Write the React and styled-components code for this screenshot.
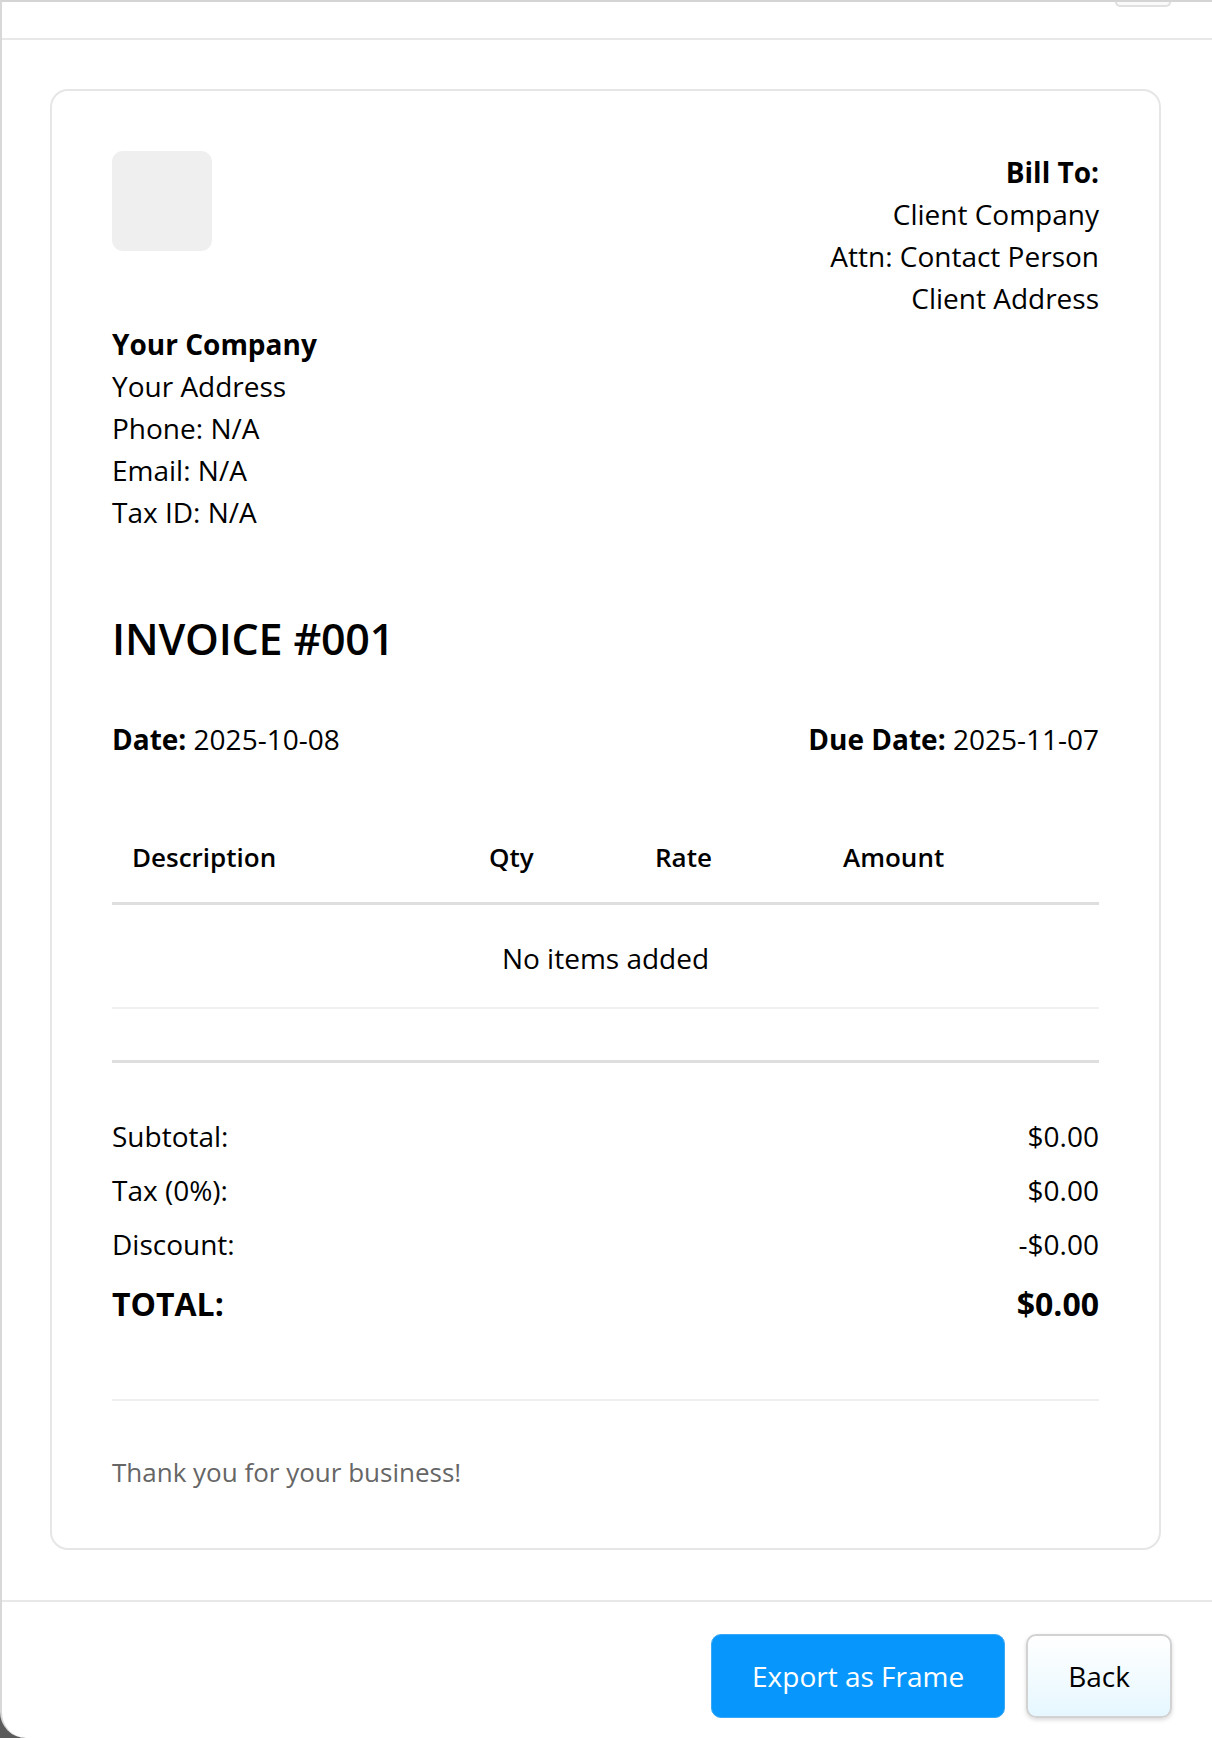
import React from "react";
import styled, { createGlobalStyle } from "styled-components";

const GlobalStyle = createGlobalStyle`
  html, body {
    margin: 0;
    padding: 0;
    background: #5b5b5b;
  }
  * { box-sizing: border-box; }
  body {
    font-family: "Open Sans", "Noto Sans", "Liberation Sans", sans-serif;
    color: #000;
  }
`;

const Screen = styled.div`
  height: 1738px;
  overflow: hidden;
  background: #5b5b5b;
`;

const Modal = styled.div`
  height: 1738px;
  background: #fff;
  border-top: 2px solid #d4d4d4;
  border-left: 2px solid #d8d8d8;
  border-bottom-left-radius: 26px;
  display: flex;
  flex-direction: column;
`;

const ModalHeader = styled.div`
  height: 38px;
  border-bottom: 2px solid #e8e8e8;
  display: flex;
  justify-content: flex-end;
  align-items: flex-start;
  padding-right: 41px;
`;

const CloseStub = styled.div`
  width: 56px;
  height: 5px;
  border: 2px solid #e0e0e0;
  border-top: none;
  border-radius: 0 0 8px 8px;
  background: #fafafa;
`;

const ModalBody = styled.div`
  padding: 49px 51px 50px 48px;
`;

const Card = styled.div`
  border: 2px solid #e6e6e6;
  border-radius: 18px;
  padding: 60px 60px 57px;
  font-size: 28px;
  line-height: 42px;
`;

const TopRow = styled.div`
  display: flex;
  justify-content: space-between;
  align-items: flex-start;
`;

const LogoBox = styled.div`
  width: 100px;
  height: 100px;
  border-radius: 11px;
  background: #efefef;
`;

const BillTo = styled.div`
  text-align: right;
`;

const Strong = styled.div`
  font-weight: 700;
`;

const CompanyBlock = styled.div`
  margin-top: 4px;
`;

const Title = styled.h1`
  margin: 81px 0 0;
  font-size: 43px;
  line-height: 50px;
  font-weight: 600;
  letter-spacing: -0.2px;
`;

const DatesRow = styled.div`
  margin-top: 54px;
  display: flex;
  justify-content: space-between;
`;

const Label = styled.b`
  font-weight: 700;
`;

const Table = styled.div`
  margin-top: 55px;
`;

const HeadRow = styled.div`
  display: grid;
  grid-template-columns: 357px 166px 188px 1fr;
  border-bottom: 3px solid #dedede;
`;

const Th = styled.div`
  padding: 21px 20px 24px;
  font-weight: 600;
  font-size: 26px;
`;

const EmptyRow = styled.div`
  padding: 32px 20px 28px;
  text-align: center;
  border-bottom: 2px solid #f0f0f0;
`;

const Totals = styled.div`
  margin-top: 51px;
  border-top: 3px solid #dedede;
  padding-top: 52px;
  display: flex;
  flex-direction: column;
  gap: 12px;
`;

const TotalRow = styled.div`
  display: flex;
  justify-content: space-between;
  font-size: ${(p) => (p.$grand ? "32px" : "28px")};
  line-height: ${(p) => (p.$grand ? "50px" : "42px")};
  font-weight: ${(p) => (p.$grand ? 700 : 400)};
  margin-top: ${(p) => (p.$grand ? "2px" : "0")};
`;

const Note = styled.div`
  margin-top: 70px;
  border-top: 2px solid #efefef;
  padding-top: 53px;
  font-size: 26px;
  line-height: 37px;
  color: #666;
`;

const Footer = styled.div`
  border-top: 2px solid #e8e8e8;
  padding: 32px 40px 0 0;
  display: flex;
  justify-content: flex-end;
  gap: 21px;
`;

const Button = styled.button`
  height: 84px;
  padding: 0 40px;
  font-family: inherit;
  font-size: 28px;
  border-radius: 10px;
  cursor: pointer;
  color: ${(p) => (p.$primary ? "#fff" : "#000")};
  background: ${(p) =>
    p.$primary ? "#0797fc" : "linear-gradient(#ffffff, #e6f7ff)"};
  border: ${(p) => (p.$primary ? "1px solid #3aa8f5" : "2px solid #d2d2d2")};
  box-shadow: ${(p) => (p.$primary ? "none" : "0 2px 4px rgba(0,0,0,0.15)")};
`;

export default function App() {
  return (
    <>
      <GlobalStyle />
      <Screen>
        <Modal>
          <ModalHeader>
            <CloseStub />
          </ModalHeader>
          <ModalBody>
            <Card>
              <TopRow>
                <LogoBox />
                <BillTo>
                  <Strong>Bill To:</Strong>
                  <div>Client Company</div>
                  <div>Attn: Contact Person</div>
                  <div>Client Address</div>
                </BillTo>
              </TopRow>
              <CompanyBlock>
                <Strong>Your Company</Strong>
                <div>Your Address</div>
                <div>Phone: N/A</div>
                <div>Email: N/A</div>
                <div>Tax ID: N/A</div>
              </CompanyBlock>
              <Title>INVOICE #001</Title>
              <DatesRow>
                <div>
                  <Label>Date:</Label> 2025-10-08
                </div>
                <div>
                  <Label>Due Date:</Label> 2025-11-07
                </div>
              </DatesRow>
              <Table>
                <HeadRow>
                  <Th>Description</Th>
                  <Th>Qty</Th>
                  <Th>Rate</Th>
                  <Th>Amount</Th>
                </HeadRow>
                <EmptyRow>No items added</EmptyRow>
              </Table>
              <Totals>
                <TotalRow>
                  <span>Subtotal:</span>
                  <span>$0.00</span>
                </TotalRow>
                <TotalRow>
                  <span>Tax (0%):</span>
                  <span>$0.00</span>
                </TotalRow>
                <TotalRow>
                  <span>Discount:</span>
                  <span>-$0.00</span>
                </TotalRow>
                <TotalRow $grand>
                  <span>TOTAL:</span>
                  <span>$0.00</span>
                </TotalRow>
              </Totals>
              <Note>Thank you for your business!</Note>
            </Card>
          </ModalBody>
          <Footer>
            <Button $primary>Export as Frame</Button>
            <Button>Back</Button>
          </Footer>
        </Modal>
      </Screen>
    </>
  );
}
